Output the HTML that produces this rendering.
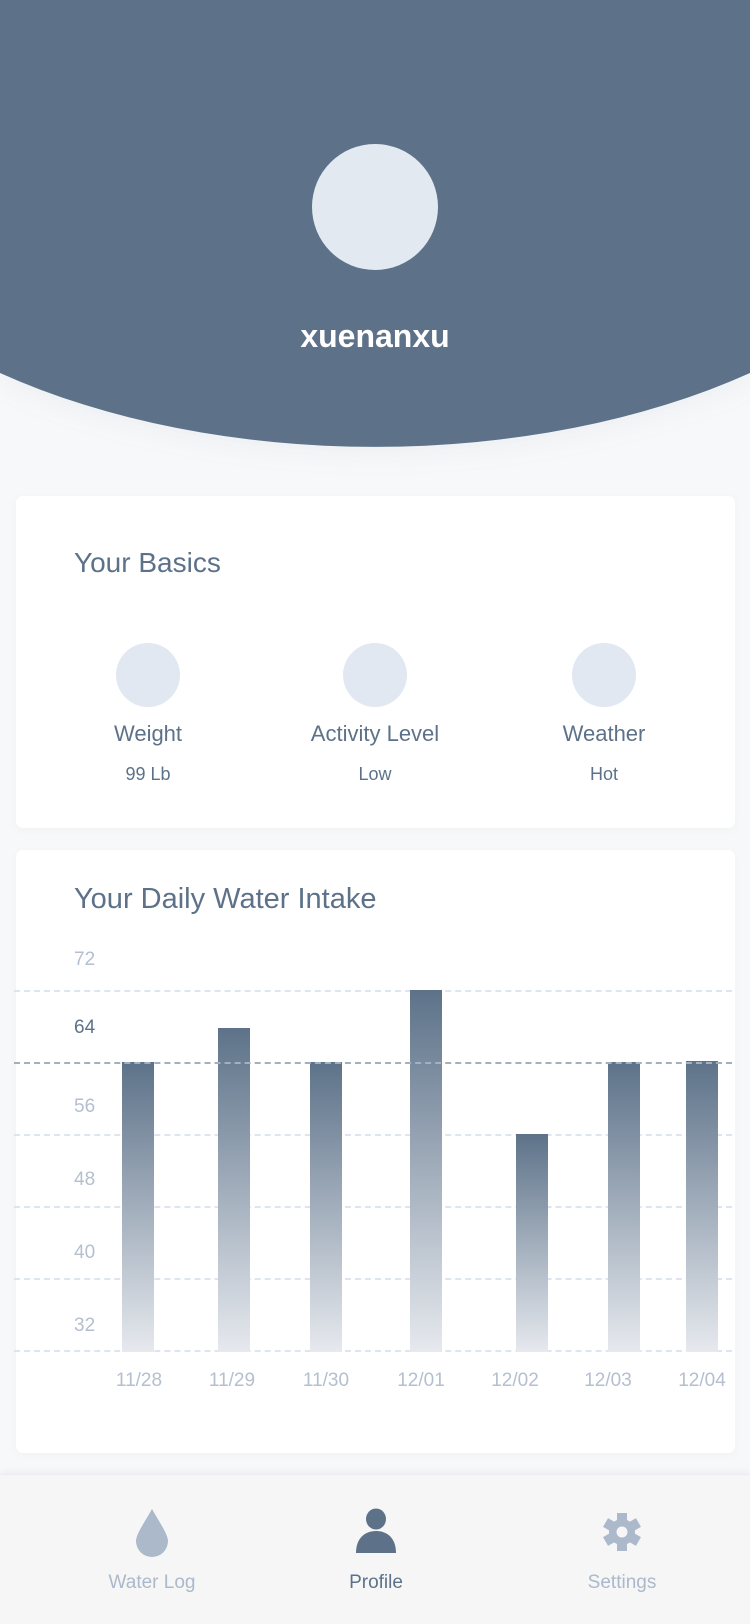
<!DOCTYPE html>
<html><head><meta charset="utf-8"><style>
*{margin:0;padding:0;box-sizing:border-box}
body{width:750px;height:1624px;background:#f7f8fa;font-family:"Liberation Sans",sans-serif;position:relative;overflow:hidden}
.abs{position:absolute}
.card{background:#fff;border-radius:7px;left:16px;width:719px;box-shadow:0 2px 10px rgba(0,0,0,.03)}
.t{color:#5d7289}
.c{text-align:center;transform:translateX(-50%);white-space:nowrap}
.circ{width:64px;height:64px;border-radius:50%;background:#e1e8f1}
.grid{left:14px;width:718px;height:0;border-top:2px dashed #dde6f0}
.bar{width:32px;background:linear-gradient(#5d7289,#e6e9ee)}
.yl{left:74px;font-size:19px;color:#b4bfcf}
.xl{top:1370px;font-size:19px;color:#b4bfcf}
</style></head><body>
<svg class="abs" style="left:0;top:0;filter:drop-shadow(0 8px 12px rgba(93,114,137,.06))" width="750" height="470" viewBox="0 0 750 470"><path d="M0 0 H750 V373 A600 337 0 0 1 0 373 Z" fill="#5d7289"/></svg>
<div class="abs circ" style="left:312px;top:144px;width:126px;height:126px;background:#e2e9f1"></div>
<div class="abs c" style="left:375px;top:318px;font-size:32px;font-weight:bold;color:#fff">xuenanxu</div>

<div class="abs card" style="top:496px;height:332px"></div>
<div class="abs t" style="left:74px;top:547px;font-size:28px">Your Basics</div>
<div class="abs circ" style="left:116px;top:643px"></div>
<div class="abs circ" style="left:343px;top:643px"></div>
<div class="abs circ" style="left:572px;top:643px"></div>
<div class="abs t c" style="left:148px;top:721px;font-size:22px">Weight</div>
<div class="abs t c" style="left:375px;top:721px;font-size:22px">Activity Level</div>
<div class="abs t c" style="left:604px;top:721px;font-size:22px">Weather</div>
<div class="abs t c" style="left:148px;top:764px;font-size:18px">99 Lb</div>
<div class="abs t c" style="left:375px;top:764px;font-size:18px">Low</div>
<div class="abs t c" style="left:604px;top:764px;font-size:18px">Hot</div>

<div class="abs card" style="top:850px;height:603px"></div>
<div class="abs t" style="left:74px;top:883px;font-size:29px">Your Daily Water Intake</div>
<div class="abs yl" style="top:949px">72</div>
<div class="abs yl" style="top:1017px;color:#5d7289">64</div>
<div class="abs yl" style="top:1096px">56</div>
<div class="abs yl" style="top:1169px">48</div>
<div class="abs yl" style="top:1242px">40</div>
<div class="abs yl" style="top:1315px">32</div>
<div class="abs grid" style="top:990px"></div>
<div class="abs grid" style="top:1134px"></div>
<div class="abs grid" style="top:1206px"></div>
<div class="abs grid" style="top:1278px"></div>
<div class="abs grid" style="top:1350px"></div>
<div class="abs bar" style="left:122px;top:1062px;height:290px"></div>
<div class="abs bar" style="left:218px;top:1028px;height:324px"></div>
<div class="abs bar" style="left:310px;top:1062px;height:290px"></div>
<div class="abs bar" style="left:410px;top:990px;height:362px"></div>
<div class="abs bar" style="left:516px;top:1134px;height:218px"></div>
<div class="abs bar" style="left:608px;top:1062px;height:290px"></div>
<div class="abs bar" style="left:686px;top:1061px;height:291px"></div>
<div class="abs grid" style="top:1062px;border-top-color:#a3b0bf"></div>
<div class="abs xl c" style="left:139px">11/28</div>
<div class="abs xl c" style="left:232px">11/29</div>
<div class="abs xl c" style="left:326px">11/30</div>
<div class="abs xl c" style="left:421px">12/01</div>
<div class="abs xl c" style="left:515px">12/02</div>
<div class="abs xl c" style="left:608px">12/03</div>
<div class="abs xl c" style="left:702px">12/04</div>

<div class="abs" style="left:0;top:1474px;width:750px;height:150px;background:#f6f6f6;box-shadow:0 -3px 6px rgba(0,0,0,.04);border-top:1px solid #ebedf0"></div>
<svg class="abs" style="left:134px;top:1508px" width="36" height="50" viewBox="0 0 36 50"><path d="M18 1 C12 12 2 26 2 33 A16 16 0 0 0 34 33 C34 26 24 12 18 1Z" fill="#abb9cb"/></svg>
<svg class="abs" style="left:355px;top:1508px" width="42" height="46" viewBox="0 0 42 46"><ellipse cx="21" cy="11" rx="10" ry="10.5" fill="#5d7289"/><path d="M1 45 C1 30 10 23 21 23 C32 23 41 30 41 45Z" fill="#5d7289"/></svg>
<svg class="abs" style="left:603px;top:1512px" width="38" height="40" viewBox="0 0 38 40"><g fill="#abb9cb"><circle cx="19" cy="20" r="13"/><rect x="14" y="1" width="10" height="38"/><rect x="14" y="1" width="10" height="38" transform="rotate(60 19 20)"/><rect x="14" y="1" width="10" height="38" transform="rotate(-60 19 20)"/></g><circle cx="19" cy="20" r="5.5" fill="#f6f6f6"/></svg>
<div class="abs c" style="left:152px;top:1572px;font-size:19px;color:#abb9cb">Water Log</div>
<div class="abs c" style="left:376px;top:1572px;font-size:19px;color:#5d7289">Profile</div>
<div class="abs c" style="left:622px;top:1572px;font-size:19px;color:#abb9cb">Settings</div>
</body></html>
